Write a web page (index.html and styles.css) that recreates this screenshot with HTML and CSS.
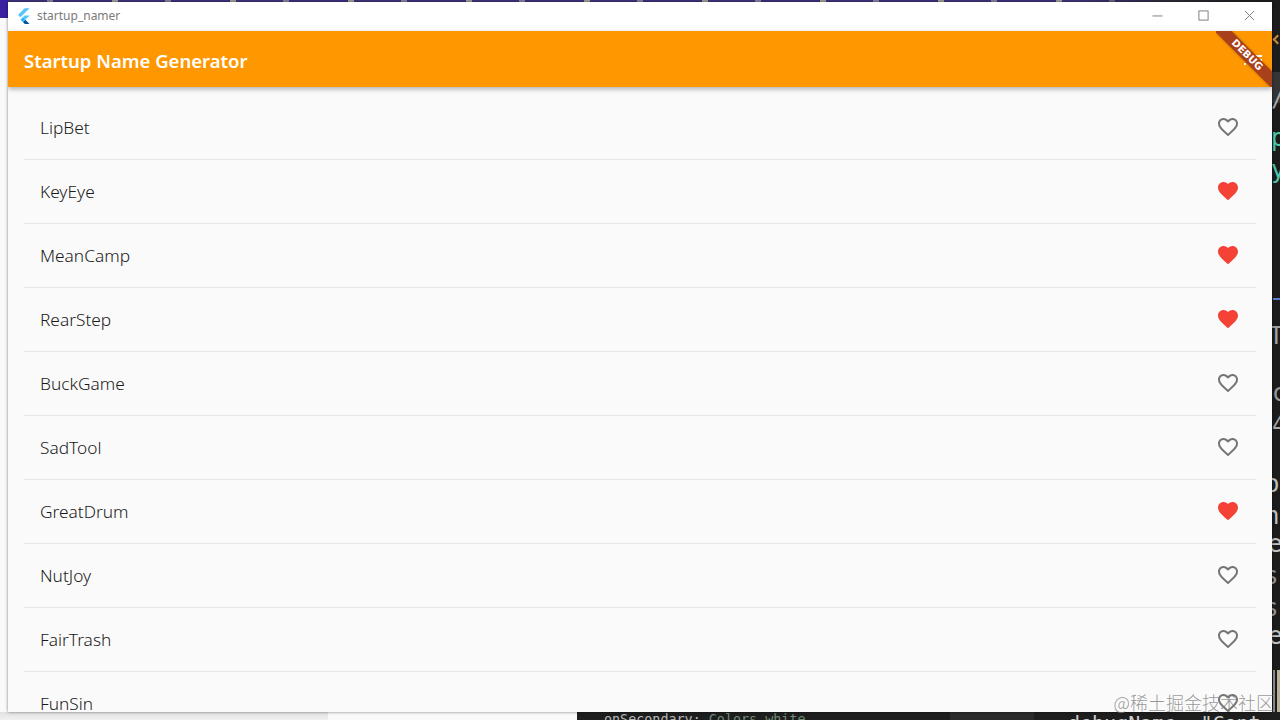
FILE: index.html
```html
<!DOCTYPE html>
<html>

<head>
    <title>startup_namer</title>
    <link rel="stylesheet" href="styles.css">
</head>

<body>
    <svg class="icon-defs">
        <defs>
            <symbol id="heart-outline" viewBox="0 0 24 24">
                <path d="M16.500 3c-1.740 0-3.410.81-4.500 2.090C10.910 3.810 9.240 3 7.500 3 4.420 3 2 5.420 2 8.500c0 3.780 3.400 6.860 8.550 11.540L12 21.350l1.450-1.320C18.600 15.360 22 12.280 22 8.500 22 5.420 19.580 3 16.500 3zm-4.400 15.550l-.1.100-.1-.1C7.140 14.240 4 11.390 4 8.500 4 6.500 5.500 5 7.500 5c1.540 0 3.040.99 3.570 2.360h1.870C13.460 5.990 14.960 5 16.500 5c2 0 3.500 1.500 3.500 3.500 0 2.890-3.140 5.740-7.900 10.050z" />
            </symbol>
            <symbol id="heart-solid" viewBox="0 0 24 24">
                <path d="M12 21.350l-1.450-1.320C5.400 15.360 2 12.280 2 8.500 2 5.420 4.420 3 7.500 3c1.740 0 3.410.81 4.500 2.090C13.090 3.810 14.760 3 16.500 3 19.580 3 22 5.420 22 8.500c0 3.780-3.400 6.860-8.550 11.540L12 21.350z" />
            </symbol>
        </defs>
    </svg>

    <!-- desktop behind the app window -->
    <div class="desk-top"></div>
    <div class="desk-left"></div>
    <div class="desk-editor">
        <span class="tab-band"></span>
        <span class="code-mark mark-chevron"></span>
        <span class="code-mark mark-blue"></span>
        <span class="code-mark mark-grey"></span>
        <span class="code-mark mark-tan"></span>
        <span class="code-bit bit-tab">/</span>
        <span class="code-bit bit-p">p</span>
        <span class="code-bit bit-y">y</span>
        <span class="code-bit bit-t">T</span>
        <span class="code-bit bit-c">c</span>
        <span class="code-bit bit-4">4</span>
        <span class="code-bit bit-o">o</span>
        <span class="code-bit bit-n">n</span>
        <span class="code-bit bit-e">e</span>
        <span class="code-bit bit-s1">s</span>
        <span class="code-bit bit-s2">s</span>
        <span class="code-bit bit-r">e</span>
    </div>
    <div class="desk-shadow"></div>
    <div class="desk-bottom">
        <span class="code-small">onSecondary: <em>Colors.white,</em></span>
        <span class="code-gutter"></span>
        <span class="code-large">debugName: "Cont</span>
    </div>

    <div class="window">
        <div class="titlebar">
            <svg class="flutter-logo" viewBox="0 0 16 18">
                <path d="M10 0h5.500L5 10.500 2.300 7.800z" fill="#54c5f8" />
                <path d="M10 8.300h5.500L10.600 13.200 7.800 10.500z" fill="#54c5f8" />
                <path d="M7.800 15.900l2.800-2.700 4.900 4.800H10z" fill="#01579b" />
                <path d="M5.100 13.200l2.700-2.700 2.800 2.700-2.800 2.700z" fill="#29b6f6" />
            </svg>
            <span class="window-title">startup_namer</span>
            <div class="window-buttons">
                <svg class="win-btn" viewBox="0 0 12 12">
                    <path d="M0.500 6.500h11" />
                </svg>
                <svg class="win-btn" viewBox="0 0 12 12">
                    <rect x="1" y="1" width="10" height="10" />
                </svg>
                <svg class="win-btn" viewBox="0 0 12 12">
                    <path d="M1 1l10 10M11 1L1 11" />
                </svg>
            </div>
        </div>

        <div class="appbar">
            <span class="appbar-title">Startup Name Generator</span>
            <svg class="appbar-action" viewBox="0 0 24 24">
                <path d="M3 13h2v-2H3v2zm0 4h2v-2H3v2zm0-8h2V7H3v2zm4 4h14v-2H7v2zm0 4h14v-2H7v2zM7 7v2h14V7H7z" />
            </svg>
        </div>

        <div class="debug-banner"><span>DEBUG</span></div>

        <div class="list">
            <div class="tile">
                <span class="tile-name">LipBet</span>
                <svg class="heart"><use href="#heart-outline" /></svg>
            </div>
            <div class="tile">
                <span class="tile-name">KeyEye</span>
                <svg class="heart saved"><use href="#heart-solid" /></svg>
            </div>
            <div class="tile">
                <span class="tile-name">MeanCamp</span>
                <svg class="heart saved"><use href="#heart-solid" /></svg>
            </div>
            <div class="tile">
                <span class="tile-name">RearStep</span>
                <svg class="heart saved"><use href="#heart-solid" /></svg>
            </div>
            <div class="tile">
                <span class="tile-name">BuckGame</span>
                <svg class="heart"><use href="#heart-outline" /></svg>
            </div>
            <div class="tile">
                <span class="tile-name">SadTool</span>
                <svg class="heart"><use href="#heart-outline" /></svg>
            </div>
            <div class="tile">
                <span class="tile-name">GreatDrum</span>
                <svg class="heart saved"><use href="#heart-solid" /></svg>
            </div>
            <div class="tile">
                <span class="tile-name">NutJoy</span>
                <svg class="heart"><use href="#heart-outline" /></svg>
            </div>
            <div class="tile">
                <span class="tile-name">FairTrash</span>
                <svg class="heart"><use href="#heart-outline" /></svg>
            </div>
            <div class="tile">
                <span class="tile-name">FunSin</span>
                <svg class="heart"><use href="#heart-outline" /></svg>
            </div>
        </div>
    </div>

    <div class="watermark">@稀土掘金技术社区</div>
</body>

</html>
```

FILE: styles.css
```css
html,
body {
    width: 100%;
    height: 100%;
    display: block;
    overflow: hidden;
    margin: 0;
    padding: 0;
}

body {
    position: relative;
    background-color: #fafafa;
    font-family: "Noto Sans", "Open Sans", sans-serif;
}

.icon-defs {
    position: absolute;
    width: 0;
    height: 0;
}

/* desktop pieces around the window */
.desk-top {
    position: absolute;
    left: 0;
    top: 0;
    width: 100%;
    height: 2px;
    background:
        linear-gradient(90deg, transparent 0, transparent 84%, #2b2b33 92%, #1c1c1c 100%),
        repeating-linear-gradient(90deg, #40367f 0, #40367f 47px, #8a86a0 47px, #8a86a0 53px, #3d3282 53px, #3d3282 112px, #a5a398 112px, #a5a398 118px);
}

.desk-left {
    position: absolute;
    left: 0;
    top: 0;
    width: 8px;
    height: 18px;
    background-color: #3a1fa0;
}

.desk-editor {
    position: absolute;
    left: 1272px;
    top: 2px;
    width: 8px;
    height: 718px;
    overflow: hidden;
    background-color: #1c1c1c;
}

.tab-band {
    position: absolute;
    left: 0;
    top: 70px;
    width: 8px;
    height: 31px;
    background-color: #353535;
}

.code-mark {
    position: absolute;
}

.mark-chevron {
    left: 2px;
    top: 34px;
    width: 5px;
    height: 5px;
    border-left: 2px solid #d08a3a;
    border-bottom: 2px solid #d08a3a;
    transform: rotate(45deg);
}

.mark-blue {
    left: 1px;
    top: 296px;
    width: 7px;
    height: 2px;
    background-color: #5a7fd0;
}

.mark-grey {
    left: 1px;
    top: 668px;
    width: 2px;
    height: 42px;
    background-color: #8f8f8f;
}

.mark-tan {
    left: 5px;
    top: 668px;
    width: 3px;
    height: 42px;
    background-color: #b8b09a;
}

.code-bit {
    position: absolute;
    left: -1px;
    font-family: "DejaVu Sans Mono", monospace;
    font-size: 24px;
    line-height: 28px;
    color: #c2c2c2;
}

.bit-tab {
    top: 82px;
    color: #a8a8a8;
}

.bit-p {
    top: 122px;
    color: #4ec9a8;
}

.bit-y {
    top: 154px;
    color: #4ec9a8;
}

.bit-t {
    top: 320px;
    left: -3px;
    color: #a0a0a0;
}

.bit-c {
    top: 377px;
    left: 0;
    color: #9a9a9a;
}

.bit-4 {
    top: 409px;
    left: 0;
    color: #a8a8a8;
}

.bit-o {
    top: 468px;
    left: -7px;
}

.bit-n {
    top: 500px;
    left: -7px;
}

.bit-e {
    top: 528px;
    left: -4px;
}

.bit-s1 {
    top: 560px;
    left: -8px;
    color: #989898;
}

.bit-s2 {
    top: 592px;
    left: -8px;
    color: #989898;
}

.bit-r {
    top: 620px;
    left: -4px;
}

.desk-shadow {
    position: absolute;
    left: 0;
    top: 712px;
    width: 328px;
    height: 8px;
    background: linear-gradient(#e2e2e2, #f0f0f0);
}

.desk-bottom {
    position: absolute;
    left: 577px;
    top: 712px;
    width: 703px;
    height: 8px;
    overflow: hidden;
    background-color: #1e1e1e;
}

.code-small {
    position: absolute;
    left: 27px;
    top: 0;
    font-family: "DejaVu Sans Mono", monospace;
    font-size: 13.400px;
    line-height: 16px;
    color: #b8b8b8;
    white-space: nowrap;
}

.code-small em {
    font-style: normal;
    color: #6f8a78;
}

.code-gutter {
    position: absolute;
    left: 373px;
    top: 0;
    width: 84px;
    height: 8px;
    background-color: #2b2b2b;
}

.code-large {
    position: absolute;
    left: 491px;
    top: -1px;
    font-family: "DejaVu Sans Mono", monospace;
    font-size: 20px;
    line-height: 24px;
    color: #d0d0d0;
    white-space: nowrap;
}

/* app window */
.window {
    position: absolute;
    left: 8px;
    top: 2px;
    width: 1264px;
    height: 710px;
    display: flex;
    flex-direction: column;
    overflow: hidden;
    background-color: #fafafa;
    box-shadow: 0 0 3px rgba(0, 0, 0, 0.5);
}

.titlebar {
    flex: none;
    height: 27px;
    padding-bottom: 2px;
    display: flex;
    align-items: center;
    background-color: #fff;
}

.flutter-logo {
    width: 14px;
    height: 16px;
    margin-left: 8px;
}

.window-title {
    margin-left: 7px;
    font-size: 12px;
    color: #7a7a7a;
}

.window-buttons {
    margin-left: auto;
    display: flex;
    align-items: center;
    gap: 35px;
    padding-right: 17px;
    padding-bottom: 1px;
}

.win-btn {
    width: 11px;
    height: 11px;
    fill: none;
    stroke: #777;
    stroke-width: 1;
}

.appbar {
    flex: none;
    height: 54px;
    padding: 2px 7px 0 16px;
    display: flex;
    align-items: center;
    justify-content: space-between;
    background-color: #ff9800;
    box-shadow: 0 2px 5px rgba(0, 0, 0, 0.3);
    position: relative;
    z-index: 1;
}

.appbar-title {
    font-size: 18.500px;
    font-weight: 600;
    color: #fff;
}

.appbar-action {
    width: 24px;
    height: 24px;
    fill: #fff;
}

/* the ribbon lies over the corner of the app bar */
.debug-banner {
    position: absolute;
    right: 0;
    top: 29px;
    width: 56px;
    height: 56px;
    overflow: hidden;
    z-index: 2;
}

.debug-banner span {
    position: absolute;
    left: -9px;
    top: 18px;
    width: 80px;
    height: 12px;
    transform: rotate(45deg);
    background-color: #a8401b;
    box-shadow: 0 0 3px rgba(0, 0, 0, 0.3);
    font-family: "DejaVu Sans", sans-serif;
    font-size: 10px;
    font-weight: 700;
    line-height: 12px;
    text-align: center;
    color: #fff;
}

.list {
    flex: 1;
    padding: 9px 16px 0;
    overflow: hidden;
}

.tile {
    height: 63px;
    display: flex;
    align-items: center;
    justify-content: space-between;
    padding: 0 16px;
    border-bottom: 1px solid #e6e6e6;
}

.tile-name {
    font-size: 17.300px;
    font-weight: 300;
    color: #1a1a1a;
}

.heart {
    width: 24px;
    height: 24px;
    margin-bottom: 2px;
    fill: #757575;
}

.heart.saved {
    fill: #f44336;
}

.watermark {
    position: absolute;
    right: 6px;
    bottom: 6px;
    font-family: "Noto Sans CJK SC", sans-serif;
    font-size: 18px;
    line-height: 24px;
    font-weight: 300;
    color: rgba(125, 125, 125, 0.8);
}
```
